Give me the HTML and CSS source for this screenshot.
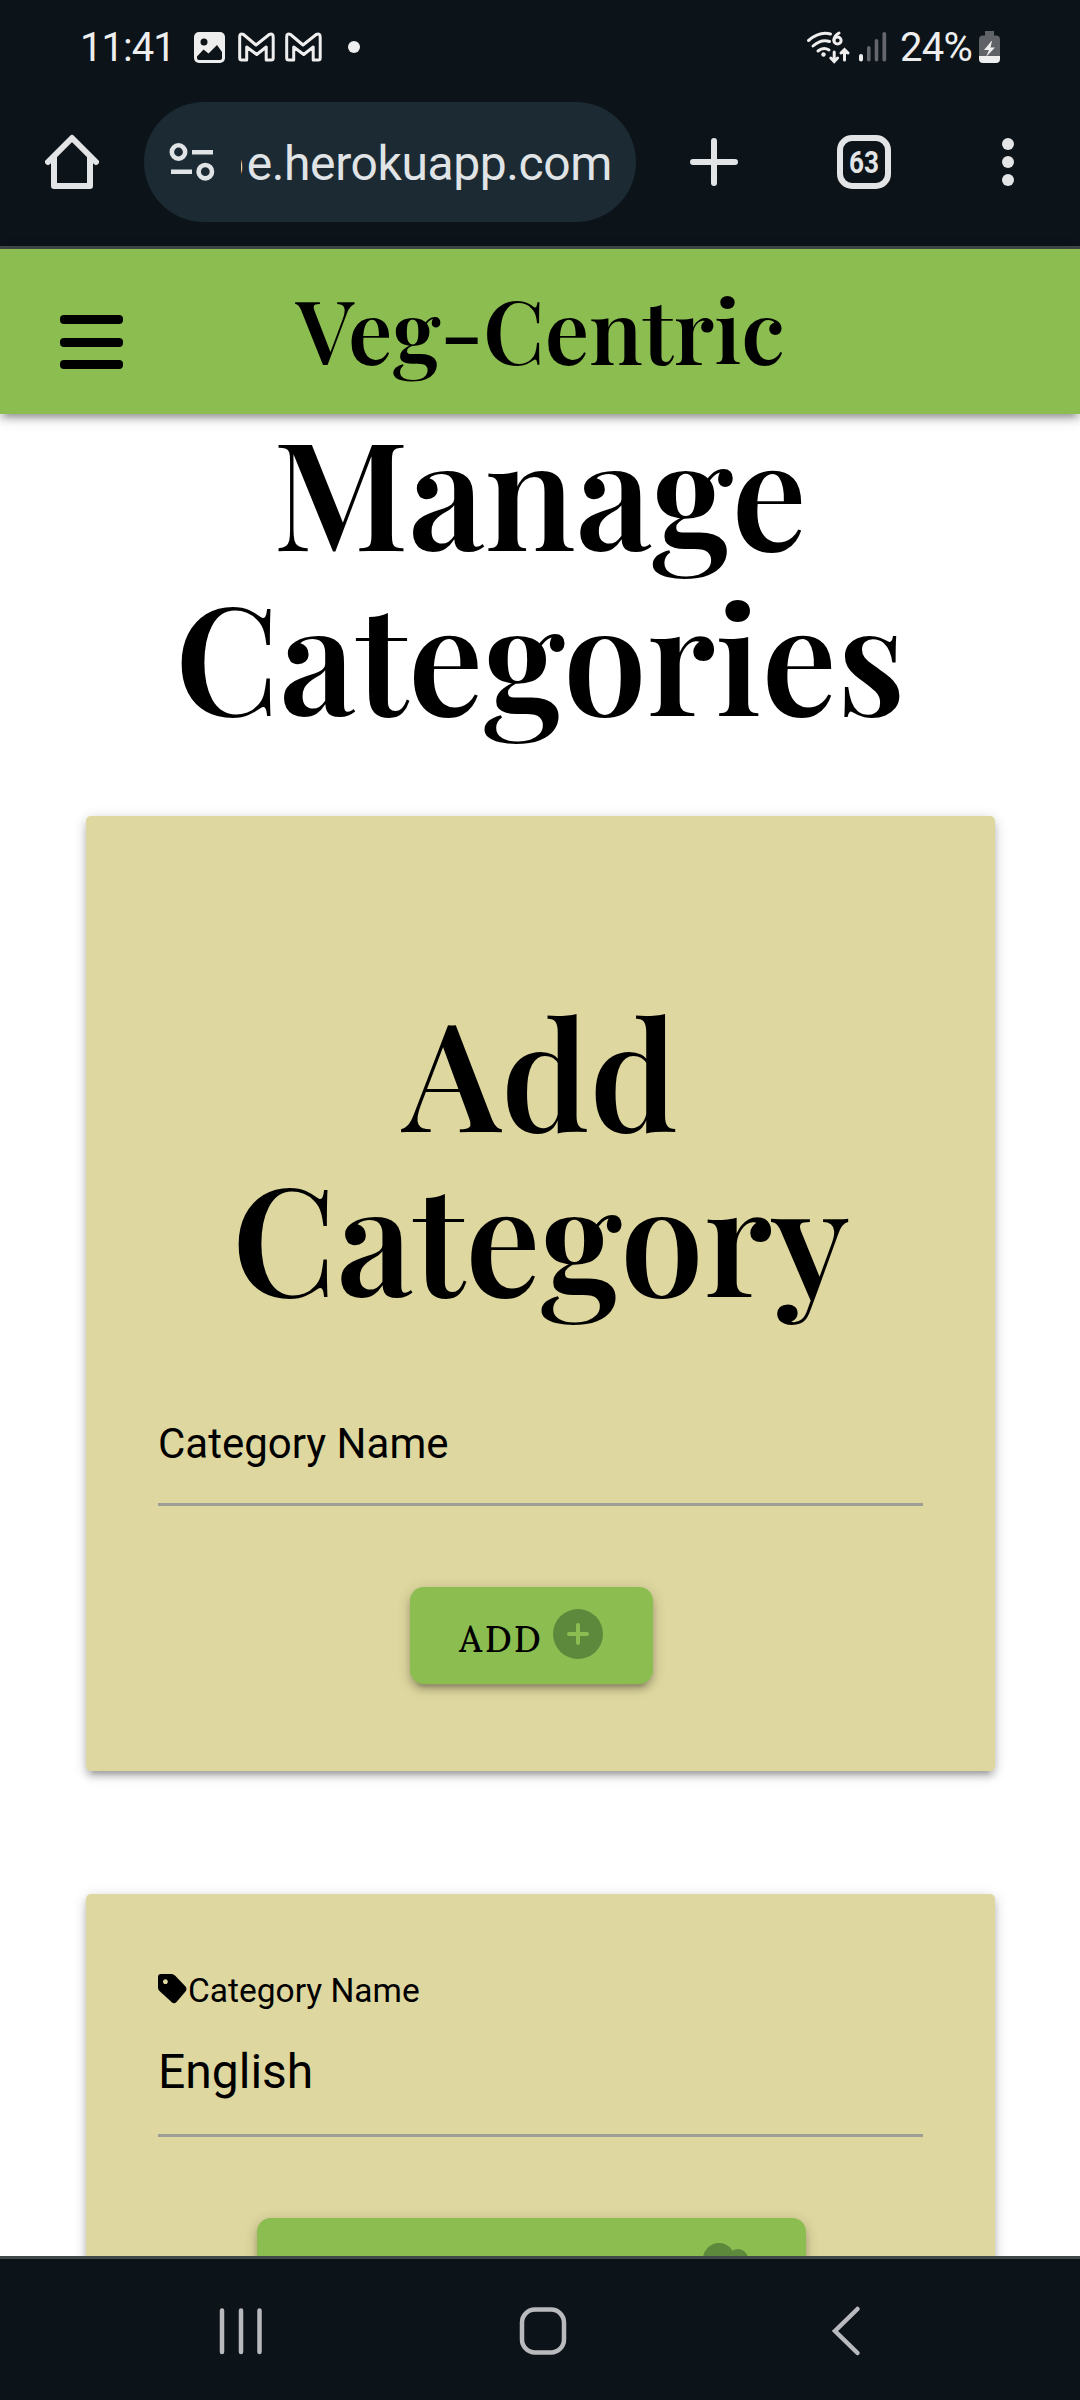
FILE: index.html
```html
<!DOCTYPE html>
<html lang="en">
<head>
<meta charset="utf-8">
<title>Veg-Centric</title>
<link rel="stylesheet" href="styles.css">
</head>
<body>
<div class="phone">
  <div class="status">
    <span class="clock">11:41</span>
    <svg class="notifications" width="170" height="96" viewBox="190 0 170 96">
      <rect x="194" y="32" width="31" height="31" rx="5" fill="#eee"/>
      <circle cx="204" cy="42" r="3.5" fill="#0c1319"/>
      <path d="M197 56.500l6.500-7 5 4 8.500-8.500 5 7v6q0 2-2 2h-21q-2 0-2-2z" fill="#0c1319"/>
      <g fill="none" stroke="#eee" stroke-width="3" stroke-linejoin="round">
        <path id="mail" d="M239.700 37v21q0 2 2 2h5V47l10 7.500 9.500-7.500v13h5q2 0 2-2V37q0-4-4-2.500L256 45l-12.500-10.500q-4-1.500-3.800 2.500z"/>
        <use href="#mail" x="47"/>
      </g>
      <circle cx="354" cy="47" r="6" fill="#eee"/>
    </svg>
    <svg class="signal" width="84" height="96" viewBox="806 0 84 96">
      <g fill="none" stroke="#eee" stroke-width="3" stroke-linecap="round">
        <path d="M808.500 40.500q11-9.500 22-6.500M813 46q8.500-7.500 16.500-4.500M818 51q5.500-4.500 11-1"/>
        <path d="M834.200 52v9M830.800 58l3.400 3.500 3.400-3.500M844.500 60V49.500M841 53l3.500-3.500L848 53"/>
        <circle cx="837.500" cy="40.500" r="3.600"/><path d="M834 40q0-4 5-7"/>
      </g>
      <circle cx="823.500" cy="54.500" r="2.200" fill="#eee"/>
      <rect x="859" y="54" width="4" height="7.500" rx="2" fill="#eee"/>
      <g fill="#63666a"><rect x="867" y="46" width="3.600" height="15.500" rx="1.800"/><rect x="874.700" y="39" width="3.600" height="22.500" rx="1.800"/><rect x="882.400" y="32" width="3.800" height="29.500" rx="1.800"/></g>
    </svg>
    <span class="percent">24%</span>
    <svg class="battery" width="22" height="96" viewBox="979 0 22 96">
      <path d="M985 31h9v4.500h2q4 0 4 4V56h-21V39.500q0-4 4-4h2z" fill="#5f6266"/>
      <path d="M979 56h21v3q0 4-4 4h-13q-4 0-4-4z" fill="#eee"/>
      <path d="M991.500 41l-7.500 9h5l-3 7 9-9.500h-4.500l1.500-6.500z" fill="#eee"/>
    </svg>
  </div>

  <div class="toolbar">
    <svg class="home" width="54" height="56" viewBox="45 134 54 56" fill="none" stroke="#e2e4e6" stroke-width="6" stroke-linejoin="round" stroke-linecap="round">
      <path d="M48 162l24-24 24 24M54 157v29h36v-29"/>
    </svg>
    <div class="address">
      <svg width="46" height="40" viewBox="169 142 46 40" fill="none" stroke="#e0e4e6" stroke-width="4.600">
        <circle cx="178.500" cy="152" r="6.700"/><circle cx="205.300" cy="171.700" r="6.700"/><path d="M192 152.300h21M171 171.800h21"/>
      </svg>
      <span class="url"><span class="scrolled">p</span>e.herokuapp.com</span>
    </div>
    <svg class="actions" width="330" height="60" viewBox="690 132 330 60">
      <path d="M693 162h42M714 141v42" stroke="#e2e4e6" stroke-width="6" stroke-linecap="round"/>
      <rect x="840" y="138" width="48" height="48" rx="12" fill="none" stroke="#e2e4e6" stroke-width="6"/>
      <text class="tab-count" x="849" y="172.500" textLength="30" lengthAdjust="spacingAndGlyphs">63</text>
      <g fill="#e2e4e6"><circle cx="1008" cy="144" r="6"/><circle cx="1008" cy="162" r="6"/><circle cx="1008" cy="180" r="6"/></g>
    </svg>
  </div>

  <header class="site-header">
    <div class="burger"><i></i><i></i><i></i></div>
    <div class="brand">Veg-Centric</div>
  </header>

  <main class="page">
    <h1 class="heading">Manage<br>Categories</h1>

    <section class="card add-card">
      <h2 class="heading">Add<br>Category</h2>
      <div class="field">Category Name</div>
      <div class="button add-button">
        <span>ADD</span>
        <svg width="52" height="52" viewBox="0 0 52 52"><circle cx="26" cy="26" r="25" fill="#5c893c"/><path d="M17 26h18M26 17v18" stroke="#8bbd50" stroke-width="4" stroke-linecap="round"/></svg>
      </div>
    </section>

    <section class="card item-card">
      <div class="label">
        <svg width="29" height="30" viewBox="0 0 29 30"><path fill-rule="evenodd" d="M3 0h10.500q2 0 3.500 1.500l10.500 11q2 2.500 0 5L18.500 28q-2.500 2.500-5 0L1.500 17Q0 15.500 0 13.500V3q0-3 3-3zM7.400 5.300a2.400 2.400 0 1 0 .01 0z"/></svg>
        <span>Category Name</span>
      </div>
      <div class="value">English</div>
      <div class="button edit-button">
        <svg width="60" height="52" viewBox="0 0 60 52" fill="#5c893c"><circle cx="21" cy="17" r="16"/><circle cx="40" cy="17" r="10"/></svg>
      </div>
    </section>
  </main>

  <nav class="navbar">
    <svg width="1080" height="141" viewBox="0 2259 1080 141" fill="none" stroke="#b9babd" stroke-width="4.500" stroke-linecap="round">
      <path d="M222 2310.500v41.500M241 2310.500v41.500M259.500 2310.500v41.500"/>
      <rect x="522" y="2309.500" width="42" height="43" rx="13"/>
      <path d="M857.500 2309l-22.500 22 22.500 22"/>
    </svg>
  </nav>
</div>
</body>
</html>
```
FILE: styles.css
```css
* { box-sizing: border-box; }
body { margin: 0; background: #fff; color: #000; font-family: Roboto, sans-serif; }
svg { display: block; flex: none; }

.phone { width: 1080px; height: 2400px; display: flex; flex-direction: column; overflow: hidden; }

.status { flex: none; height: 96px; display: flex; background: #0c1319; color: #eee; font-size: 40px; line-height: 95px; }
.clock { width: 110px; margin-left: 80px; letter-spacing: -1px; }
.signal { margin-left: 446px; }
.percent { width: 79px; margin-left: 10px; letter-spacing: -0.700px; }

.toolbar { flex: none; height: 153px; padding: 6px 60px 0 45px; display: flex; align-items: flex-start; background: #0c1319; border-bottom: 3px solid #41484a; }
.home { margin-top: 32px; }
.address { width: 492px; height: 120px; margin-left: 45px; padding: 0 24px 0 25px; display: flex; align-items: center; border-radius: 60px; background: #1b2a33; }
.url { width: 372px; margin-left: 26px; display: flex; justify-content: flex-end; overflow: hidden; white-space: nowrap; color: #e0e4e6; font-size: 48px; letter-spacing: -0.400px; line-height: 120px; padding-top: 3px; }
.scrolled { margin-right: 3px; }
.actions { margin: 30px 0 0 54px; }
.tab-count { font: bold 32px Roboto, sans-serif; fill: #e2e4e6; }

.site-header { flex: none; height: 165px; padding-left: 60px; display: flex; align-items: flex-start; background: #8bbd50; position: relative; z-index: 1; box-shadow: 0 6px 6px rgba(0,0,0,.14), 0 9px 3px -6px rgba(0,0,0,.12), 0 3px 14px rgba(0,0,0,.2); }
.burger { width: 63px; margin-top: 66px; display: grid; gap: 13.500px; }
.burger i { height: 9px; border-radius: 4px; background: #000; }
.brand { margin-left: 173px; font: 600 88.200px/159px "Playfair Display", "Liberation Serif", serif; }

.page { flex: 1; min-height: 0; overflow: hidden; background: #fff; }
.heading { margin: 0; text-align: center; font: 600 149.600px/164.500px "Playfair Display", "Liberation Serif", serif; white-space: nowrap; }
.page > .heading { margin-top: -7px; }

.card { width: 909px; margin-left: 86px; padding: 0 72px; border-radius: 5px; background: #ded79f; box-shadow: 0 6px 6px rgba(0,0,0,.14), 0 9px 3px -6px rgba(0,0,0,.12), 0 3px 14px rgba(0,0,0,.2); }
.add-card { height: 955px; margin-top: 80px; padding-top: 172px; }
.field { height: 113px; margin-top: 76px; padding-top: 21px; border-bottom: 3px solid #9e9e96; font-size: 42px; line-height: 60px; }
.button { display: flex; border-radius: 14px; background: #8bbd50; box-shadow: 0 6px 6px rgba(0,0,0,.14), 0 9px 3px -6px rgba(0,0,0,.12), 0 3px 14px rgba(0,0,0,.2); }
.add-button { width: 243px; height: 97px; margin: 81px 0 0 252px; padding-left: 49px; font: 500 36px/105px Lora, "Liberation Serif", serif; letter-spacing: 2.600px; }
.add-button span { width: 93px; white-space: nowrap; }
.add-button svg { margin-top: 21px; }

.item-card { height: 500px; margin-top: 123px; padding-top: 80px; }
.label { display: flex; align-items: flex-start; gap: 1px; font-size: 33.500px; line-height: 33px; }
.value { height: 130px; border-bottom: 3px solid #9e9e96; font-size: 48px; line-height: 130px; }
.edit-button { width: 549px; height: 97px; margin: 81px 0 0 99px; padding: 24px 48px 0 0; justify-content: flex-end; }

.navbar { flex: none; height: 144px; background: #0c1319; border-top: 3px solid #41484a; }
```
